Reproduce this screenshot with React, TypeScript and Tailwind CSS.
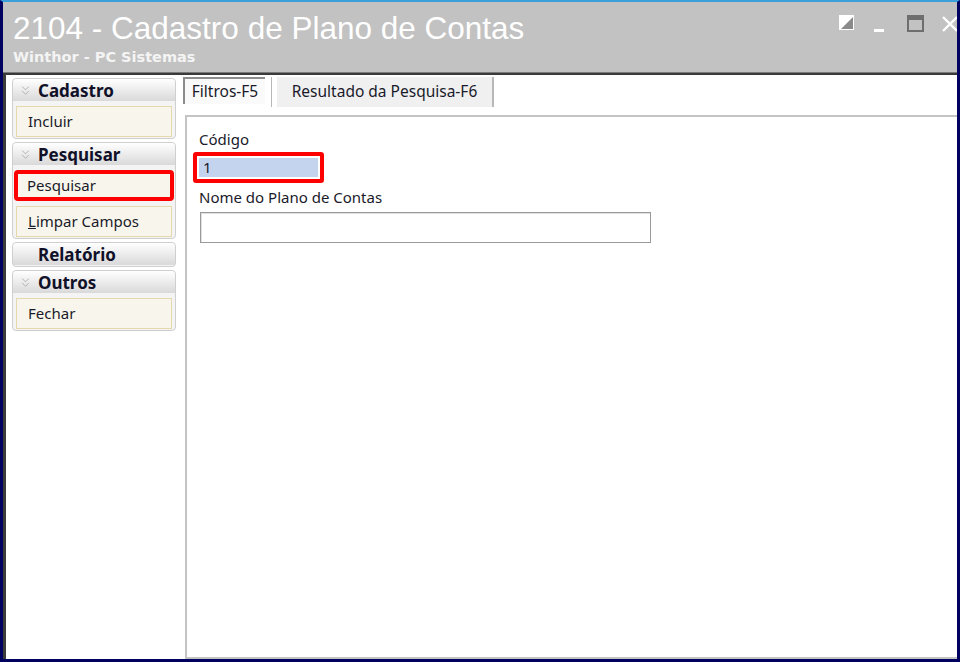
import { ChevronsDown } from "lucide-react";

const ui = { fontFamily: '"Noto Sans", "DejaVu Sans", sans-serif' };

function PanelHeader({ title, chevron = true }: { title: string; chevron?: boolean }) {
  return (
    <div className="flex h-[22px] items-center rounded-t-[4px] bg-gradient-to-b from-white to-[#d9d9d9] pl-[5px]">
      {chevron ? (
        <ChevronsDown size={15} strokeWidth={1.4} className="text-[#a8a8a8]" />
      ) : (
        <span className="w-[15px]" />
      )}
      <span className="ml-[5px] text-[17px] font-bold leading-none text-[#101028]">{title}</span>
    </div>
  );
}

function Item({ label, highlight = false, underline }: { label: string; highlight?: boolean; underline?: string }) {
  const first = underline ? label.slice(0, 1) : "";
  const rest = underline ? label.slice(1) : label;
  return (
    <div
      className={
        highlight
          ? "mx-[1px] mt-[5px] flex h-[31px] items-center rounded-[4px] border-[4px] border-[#ff0000] bg-[#f8f6ec] pl-[9px] text-[15px] text-[#1a1a2a]"
          : "mx-[3px] mt-[5px] flex h-[31px] items-center border border-[#e3d9ac] bg-[#f8f6ec] pl-[11px] text-[15px] text-[#1a1a2a]"
      }
    >
      {underline && <span className="underline">{first}</span>}
      {rest}
    </div>
  );
}

function Panel({ children }: { children: React.ReactNode }) {
  return (
    <div className="mb-[3px] rounded-[4px] border border-[#cfcfcf] bg-[#f4f4f4] pb-[1px]">{children}</div>
  );
}

export default function App() {
  return (
    <div
      className="flex h-[662px] w-[960px] flex-col border-x-[3px] border-b-[3px] border-t-[2px] border-x-[#00005e] border-b-[#00005e] border-t-[#3b9fd9] bg-[#00005e]"
      style={ui}
    >
      <div className="flex h-[70px] shrink-0 bg-[#c2c2c2]">
        <div className="flex flex-1 flex-col pl-[10px]">
          <div
            className="mt-[8px] text-[31.5px] leading-[36px] text-white"
            style={{ fontFamily: '"Liberation Sans", Arial, sans-serif' }}
          >
            2104 - Cadastro de Plano de Contas
          </div>
          <div
            className="mt-[2px] text-[14.5px] font-bold leading-[18px] text-[#f4f4f4]"
            style={{ fontFamily: '"DejaVu Sans", Verdana, sans-serif' }}
          >
            Winthor - PC Sistemas
          </div>
        </div>
        <div className="flex items-start pt-[12px]">
          <svg width="18" height="18" viewBox="0 0 18 18" className="mr-[16px]">
            <rect x="1" y="1" width="15" height="15" fill="white" />
            <polygon points="15,3 15,15 3,15" fill="#8a8a8a" />
          </svg>
          <svg width="14" height="18" viewBox="0 0 14 18" className="mr-[21px]">
            <rect x="2" y="15" width="10" height="3" fill="white" />
          </svg>
          <svg width="18" height="18" viewBox="0 0 18 18" className="mr-[17px]">
            <rect x="1" y="2" width="15" height="15" fill="none" stroke="#6e6e6e" strokeWidth="2" />
            <rect x="1" y="2" width="15" height="4" fill="#6e6e6e" />
          </svg>
          <svg width="15" height="18" viewBox="0 0 15 18">
            <path d="M1 3 L15 17 M15 3 L1 17" stroke="white" strokeWidth="2.4" />
          </svg>
        </div>
      </div>
      <div className="h-[3px] shrink-0 border-t border-[#7a7a7a] bg-[#3a3a3a]" />
      <div className="flex min-h-0 flex-1 border-l-[3px] border-l-[#3c3c3c] bg-white">
        <div className="w-[172px] shrink-0 pl-[6px] pr-[2px] pt-[3px]">
          <Panel>
            <PanelHeader title="Cadastro" />
            <Item label="Incluir" />
          </Panel>
          <Panel>
            <PanelHeader title="Pesquisar" />
            <Item label="Pesquisar" highlight />
            <Item label="Limpar Campos" underline="L" />
          </Panel>
          <Panel>
            <PanelHeader title="Relatório" chevron={false} />
          </Panel>
          <Panel>
            <PanelHeader title="Outros" />
            <Item label="Fechar" />
          </Panel>
        </div>
        <div className="flex min-w-0 flex-1 flex-col pl-[5px] pt-[2px]">
          <div className="flex h-[30px] shrink-0 items-start">
            <div className="flex h-[27px] w-[82px] items-center justify-center border-l-[2px] border-t-[2px] border-[#8c8c8c] bg-[#fafafa] text-[15.5px] text-[#1a1a2a]">
              Filtros-F5
            </div>
            <div className="ml-[6px] mr-[5px] h-[30px] w-[1px] bg-[#b8b8b8]" />
            <div className="flex h-[30px] w-[217px] items-center justify-center border-r-[2px] border-[#b8b8b8] bg-[#f0f0f0] text-[15.5px] text-[#1a1a2a]">
              Resultado da Pesquisa-F6
            </div>
          </div>
          <div className="ml-[2px] mt-[8px] flex-1 border-[2px] border-r-0 border-[#c4c4c4] bg-white pl-[12px] pt-[12px]">
            <div className="text-[15px] leading-[20px] text-[#1a1a2a]">Código</div>
            <div className="ml-[-6px] mt-[3px] flex h-[31px] w-[131px] items-center rounded-[3px] border-[4px] border-[#ff0000] bg-white p-[2px]">
              <div className="flex h-full w-full items-center bg-[#c4d4ee] pl-[4px] text-[15px] text-[#1a1a2a]">1</div>
            </div>
            <div className="mt-[4px] text-[15px] leading-[20px] text-[#1a1a2a]">Nome do Plano de Contas</div>
            <div className="ml-[1px] mt-[5px] h-[31px] w-[451px] border border-[#9a9a9a] bg-white shadow-[inset_1px_1px_0_#e0e0e0]" />
          </div>
        </div>
      </div>
    </div>
  );
}
